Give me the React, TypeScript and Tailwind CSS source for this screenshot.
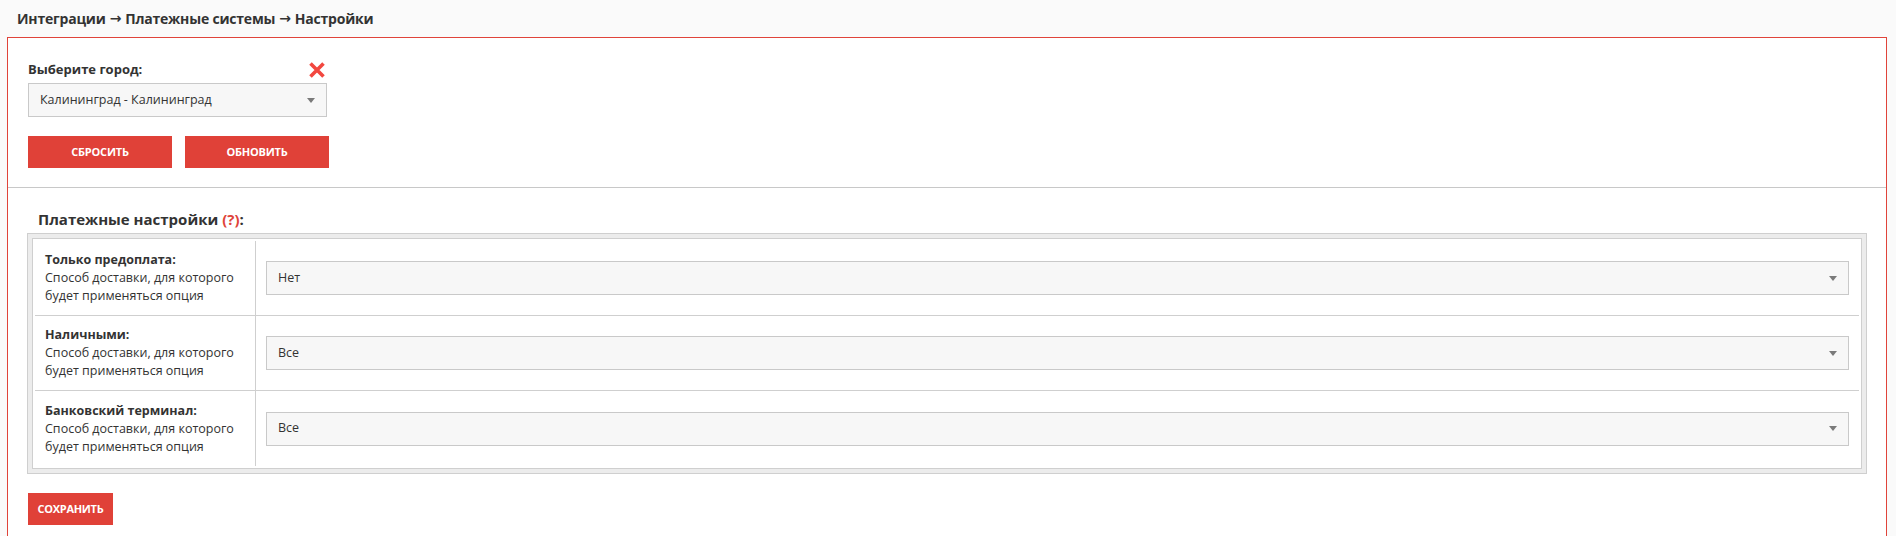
import React from "react";

function Arrow() {
  return (
    <svg width="8" height="5" viewBox="0 0 8 5" className="shrink-0">
      <path d="M0 0 H8 L4 5 Z" fill="#7a7a7a" />
    </svg>
  );
}

function SelectBox({ value, className }: { value: string; className?: string }) {
  return (
    <div
      className={
        "flex items-center justify-between bg-[#f7f7f7] border border-[#c9c9c9] pl-[11px] pr-[11px] text-[12.5px] text-[#333] " +
        (className ?? "")
      }
    >
      <span>{value}</span>
      <Arrow />
    </div>
  );
}

function BcArrow() {
  return (
    <span className="mx-[4px] font-bold" style={{ fontFamily: '"DejaVu Sans", sans-serif' }}>
      →
    </span>
  );
}

const rows = [
  { label: "Только предоплата:", value: "Нет" },
  { label: "Наличными:", value: "Все" },
  { label: "Банковский терминал:", value: "Все" },
];

export default function App() {
  return (
    <div
      className="min-h-[536px] bg-[#fafafa] text-[#333]"
      style={{ fontFamily: '"Open Sans", "Noto Sans", sans-serif' }}
    >
      <div className="h-[37px] pl-[17px] flex items-center text-[14px] font-bold text-[#333] tracking-[-0.2px]">
        Интеграции<BcArrow />Платежные системы<BcArrow />Настройки
      </div>
      <div className="ml-[7px] mr-[9px] border border-[#e0443a] bg-white">
        <div className="pt-[22px] pb-[19px] px-[20px] border-b border-[#c8c8c8]">
          <div className="w-[299px] h-[20px] flex items-center justify-between">
            <span className="text-[13px] font-bold text-[#333]">Выберите город:</span>
            <svg width="18" height="18" viewBox="0 0 18 18" className="mr-[1px]">
              <path d="M2.5 2.5 L15.5 15.5 M15.5 2.5 L2.5 15.5" stroke="#f2473f" strokeWidth="3.6" strokeLinecap="butt" />
            </svg>
          </div>
          <SelectBox value="Калининград - Калининград" className="mt-[3px] w-[299px] h-[34px]" />
          <div className="mt-[19px] flex gap-[13px]">
            <button className="w-[144px] h-[32px] bg-[#e04138] text-white text-[11px] font-bold tracking-[-0.2px]">
              СБРОСИТЬ
            </button>
            <button className="w-[144px] h-[32px] bg-[#e04138] text-white text-[11px] font-bold tracking-[-0.2px]">
              ОБНОВИТЬ
            </button>
          </div>
        </div>
        <div className="pt-[21px] px-[19px] pb-[20px]">
          <div className="pl-[11px] h-[20px] flex items-center text-[15px] font-bold text-[#333] mb-[4px]">
            Платежные настройки&nbsp;<span className="text-[#e0443a]">(?)</span>:
          </div>
          <div className="border border-[#cfcfcf] bg-[#ececec] p-[4px]">
            <div className="border border-[#cfcfcf] bg-white p-[2px]">
              {rows.map((r, i) => (
                <div
                  key={i}
                  className={
                    "flex h-[75px] " + (i < rows.length - 1 ? "border-b border-[#cfcfcf]" : "h-[74px]")
                  }
                >
                  <div className="w-[221px] shrink-0 border-r border-[#cfcfcf] pl-[10px] flex flex-col justify-center text-[12.5px] leading-[18px] text-[#333]">
                    <span className="font-bold">{r.label}</span>
                    <span>Способ доставки, для которого</span>
                    <span>будет применяться опция</span>
                  </div>
                  <div className="flex-1 px-[10px] flex items-center">
                    <SelectBox value={r.value} className="w-full h-[34px]" />
                  </div>
                </div>
              ))}
            </div>
          </div>
          <button className="mt-[19px] ml-[1px] w-[85px] h-[32px] bg-[#e04138] text-white text-[11px] font-bold tracking-[-0.3px]">
            СОХРАНИТЬ
          </button>
        </div>
      </div>
    </div>
  );
}
